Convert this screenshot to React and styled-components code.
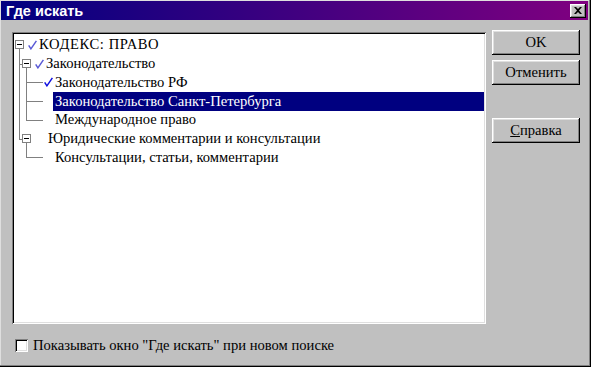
import styled, { createGlobalStyle } from "styled-components";

const serif = `"Liberation Serif", "Tinos", "DejaVu Serif", "Times New Roman", serif`;

const GlobalStyle = createGlobalStyle`
  html, body {
    margin: 0;
    padding: 0;
    background: #c0c0c0;
  }
  body {
    font-family: ${serif};
    font-size: 14.6px;
    color: #000;
  }
`;

const Window = styled.div`
  box-sizing: border-box;
  width: 591px;
  height: 367px;
  padding: 1px 3px 2px 1px;
  background: #c0c0c0;
  box-shadow: inset -1px -1px #000, inset -2px -2px #808080, inset 1px 1px #dfdfdf;
  display: flex;
  flex-direction: column;
`;

const TitleBar = styled.div`
  height: 19px;
  display: flex;
  align-items: center;
  justify-content: space-between;
  padding: 0 2px 0 5px;
  background: linear-gradient(to right, #000080, #800080);
`;

const Title = styled.span`
  font-family: "Liberation Sans", Arial, sans-serif;
  font-weight: bold;
  font-size: 14.5px;
  color: #fff;
`;

const CloseButton = styled.span`
  box-sizing: border-box;
  width: 16px;
  height: 14px;
  display: flex;
  align-items: center;
  justify-content: center;
  background: #c0c0c0;
  box-shadow: inset -1px -1px #000, inset 1px 1px #fff, inset -2px -2px #808080,
    inset 2px 2px #dfdfdf;
`;

const Body = styled.div`
  display: flex;
  flex-direction: column;
  padding: 12px 0 0 11px;
`;

const MainRow = styled.div`
  display: flex;
  align-items: flex-start;
  gap: 6px;
`;

const TreeBox = styled.div`
  box-sizing: border-box;
  width: 474px;
  height: 292px;
  padding: 3.5px 2px 2px 2px;
  background: #fff;
  box-shadow: inset 1px 1px #808080, inset -1px -1px #fff, inset 2px 2px #000,
    inset -2px -2px #dfdfdf;
`;

const Row = styled.div`
  display: flex;
  align-items: stretch;
  height: 18.75px;
  padding-left: ${(p) => p.$pl || 0}px;
`;

const Guide = styled.span`
  position: relative;
  flex: none;
  width: ${(p) => p.$w}px;

  &::before {
    content: "";
    position: absolute;
    left: ${(p) => p.$l}px;
    top: 0;
    width: 1px;
    height: ${(p) => (p.$v === "full" ? "100%" : p.$v === "half" ? "50%" : "0")};
    background: #808080;
  }

  &::after {
    content: "";
    display: ${(p) => (p.$h ? "block" : "none")};
    position: absolute;
    left: ${(p) => p.$l}px;
    right: 0;
    top: 50%;
    height: 1px;
    background: #808080;
  }
`;

const Expander = styled.span`
  position: relative;
  flex: none;
  align-self: center;
  box-sizing: border-box;
  width: 9px;
  height: 9px;
  border: 1px solid #808080;
  background: #fff;

  &::before {
    content: "";
    position: absolute;
    left: 1px;
    top: 3px;
    width: 5px;
    height: 1px;
    background: #000;
  }

  &::after {
    content: "";
    display: ${(p) => (p.$down ? "block" : "none")};
    position: absolute;
    left: 3px;
    top: calc(100% + 1px);
    width: 1px;
    height: 6px;
    background: #808080;
  }
`;

const Slot = styled.span`
  flex: none;
  width: ${(p) => p.$w}px;
  display: flex;
  align-items: center;
  justify-content: flex-end;
  box-sizing: border-box;
`;

const Label = styled.span`
  flex: 1;
  display: flex;
  align-items: center;
  padding: 0 2px;
  white-space: nowrap;
  letter-spacing: ${(p) => p.$spacing || 0}px;
  background: ${(p) => (p.$selected ? "#000080" : "transparent")};
  color: ${(p) => (p.$selected ? "#fff" : "#000")};
`;

const ButtonColumn = styled.div`
  display: flex;
  flex-direction: column;
  margin-top: -2px;
`;

const Button = styled.button`
  box-sizing: border-box;
  width: 88px;
  height: 25px;
  margin: ${(p) => p.$gap || 0}px 0 0 0;
  padding: 0;
  border: none;
  background: #c0c0c0;
  box-shadow: inset -1px -1px #000, inset 1px 1px #fff, inset -2px -2px #808080,
    inset 2px 2px #dfdfdf;
  font-family: ${serif};
  font-size: 14.6px;
  color: #000;
`;

const Footer = styled.label`
  display: flex;
  align-items: center;
  gap: 5px;
  margin-top: 13px;
  padding-left: 3px;
`;

const CheckBox = styled.span`
  box-sizing: border-box;
  width: 13px;
  height: 13px;
  background: #fff;
  box-shadow: inset 1px 1px #808080, inset -1px -1px #fff, inset 2px 2px #000,
    inset -2px -2px #dfdfdf;
`;

const Check = ({ color }) => (
  <svg width="9" height="10" viewBox="0 0 9 10">
    <path d="M0.7 5.4 L2.9 8.8 L8.4 0.8" fill="none" stroke={color} strokeWidth="1.5" />
  </svg>
);

const CloseIcon = () => (
  <svg width="8" height="7" viewBox="0 0 8 7">
    <path d="M0 0 H2 L4 2 L6 0 H8 L5 3.5 L8 7 H6 L4 5 L2 7 H0 L3 3.5 Z" fill="#000" />
  </svg>
);

const rootLine = (v, h) => ({ w: 8, l: 5, v, h });
const subLine = (v) => ({ w: 21, l: 4, v, h: true });

const rows = [
  {
    pl: 1,
    guides: [],
    box: true,
    slot: 13,
    check: "#5a5ad6",
    text: "КОДЕКС: ПРАВО",
    spacing: 0.6,
  },
  { guides: [rootLine("full", true)], box: true, slot: 13, check: "#5a5ad6", text: "Законодательство" },
  { guides: [rootLine("full"), subLine("full")], slot: 10, check: "#1010e0", text: "Законодательство РФ" },
  {
    guides: [rootLine("full"), subLine("full")],
    slot: 10,
    text: "Законодательство Санкт-Петербурга",
    selected: true,
  },
  { guides: [rootLine("full"), subLine("half")], slot: 10, text: "Международное право" },
  {
    guides: [rootLine("half", true)],
    box: true,
    slot: 15,
    text: "Юридические комментарии и консультации",
  },
  { guides: [rootLine("none"), subLine("half")], slot: 10, text: "Консультации, статьи, комментарии" },
];

export default function App() {
  return (
    <>
      <GlobalStyle />
      <Window>
        <TitleBar>
          <Title>Где искать</Title>
          <CloseButton>
            <CloseIcon />
          </CloseButton>
        </TitleBar>
        <Body>
          <MainRow>
            <TreeBox>
              {rows.map((r, i) => (
                <Row key={i} $pl={r.pl}>
                  {r.guides.map((g, j) => (
                    <Guide key={j} $w={g.w} $l={g.l} $v={g.v} $h={g.h} />
                  ))}
                  {r.box && <Expander $down />}
                  <Slot $w={r.slot}>{r.check && <Check color={r.check} />}</Slot>
                  <Label $selected={r.selected} $spacing={r.spacing}>
                    {r.text}
                  </Label>
                </Row>
              ))}
            </TreeBox>
            <ButtonColumn>
              <Button>OK</Button>
              <Button $gap={5}>Отменить</Button>
              <Button $gap={33}>
                <u>С</u>правка
              </Button>
            </ButtonColumn>
          </MainRow>
          <Footer>
            <CheckBox />
            Показывать окно "Где искать" при новом поиске
          </Footer>
        </Body>
      </Window>
    </>
  );
}
